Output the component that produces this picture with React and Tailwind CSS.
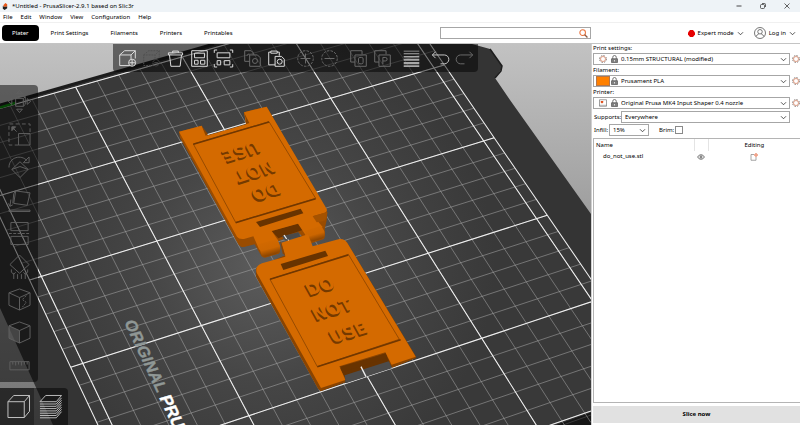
import React from "react";

/* ---------- bed projection: millimetres on the plate -> scene coordinates ---------- */
function project(x, y) {
  const s = (y - 55) / 100;
  const t = (x - 50) / 150;
  const w = 0.02876 * s - 0.09172 * t + 1;
  return [
    (225.21 * s + 111.16 * t + 115) / w,
    (-60.57 * s + 215.87 * t + 161.7) / w,
  ];
}

function segment(x1, y1, x2, y2) {
  const a = project(x1, y1);
  const b = project(x2, y2);
  return `M${a[0].toFixed(1)} ${a[1].toFixed(1)}L${b[0].toFixed(1)} ${b[1].toFixed(1)}`;
}

const range = (from, to, step) => {
  const out = [];
  for (let v = from; v <= to; v += step) out.push(v);
  return out;
};

const minorLines = [
  ...range(5, 205, 10).map((y) => segment(0, y, 255, y)),
  ...range(0, 250, 10).map((x) => segment(x, 0, x, 210)),
].join("");

const majorLines = [
  ...[0, 5, 55, 105, 155, 205, 210].map((y) => segment(0, y, 250, y)),
  ...range(0, 250, 50).map((x) => segment(x, 0, x, 210)),
].join("");

const SIGN_FONT = '"DejaVu Sans", sans-serif';

function Emboss({ x, y, turn, children }) {
  const side = turn > 90 ? -1 : 1;
  const common = {
    textAnchor: "middle",
    fontFamily: SIGN_FONT,
    fontWeight: 700,
    fontSize: 17,
  };
  return (
    <g transform={`translate(${x} ${y}) rotate(${turn}) skewX(12)`}>
      <text {...common} x={-1.8 * side} y={6 + 2 * side} fill="#743a00">{children}</text>
      <text {...common} x={-0.9 * side} y={6 + side} fill="#743a00" aria-hidden="true">{children}</text>
      <text {...common} x={0} y={6} fill="#d46a00" aria-hidden="true">{children}</text>
    </g>
  );
}

function Scene() {
  return (
    <svg
      className="absolute inset-0 h-full w-full"
      viewBox="0 44 591 381"
      preserveAspectRatio="xMinYMin slice"
      role="img"
      aria-label="Print bed"
    >
      <defs>
        <linearGradient id="sky" x1="0" y1="0" x2="0" y2="1">
          <stop offset="0" stopColor="#c2c2c2" />
          <stop offset="1" stopColor="#727272" />
        </linearGradient>
        <radialGradient id="bed" gradientUnits="userSpaceOnUse" cx="265" cy="265" r="230">
          <stop offset="0" stopColor="#5c5c5c" />
          <stop offset="0.5" stopColor="#464646" />
          <stop offset="1" stopColor="#393939" />
        </radialGradient>
        <linearGradient id="hinge" x1="0" y1="0" x2="0.35" y2="1">
          <stop offset="0" stopColor="#d46a00" />
          <stop offset="0.65" stopColor="#cc6600" />
          <stop offset="1" stopColor="#8a4400" />
        </linearGradient>
      </defs>
      <rect x="0" y="44" width="591" height="381" fill="url(#sky)" />
      <path d="M0 105L30 96L214 44H472L490 49L502 66L501 70L495 78L510 100L591 214V425H53L0 308Z" fill="#343434" />
      <path d="M0 105L214 44" stroke="#1c1c1c" strokeWidth="3" />
      <path d="M490 49L502 66L501 71L495 78" stroke="#1d1d1d" strokeWidth="1.5" fill="none" />
      <path d="M0 110L228 44H430L591 277V412L553 425H98L0 208Z" fill="url(#bed)" />
      <path d="M556 425L591 412.500V425Z" fill="#161616" />
      <path d="M563 425L591 415" stroke="#3a3a3a" strokeWidth="1" />
      <path d={minorLines} stroke="#a8a8a8" strokeOpacity="0.68" strokeWidth="0.8" fill="none" />
      <path d={majorLines} stroke="#f0f0f0" strokeWidth="1.05" fill="none" />
      <path d="M0 107.500L15 103" stroke="#0a8a0a" strokeWidth="2.500" />

      <g transform="translate(124 322) rotate(65) skewX(-9)" fontFamily='"Liberation Sans", Arial, sans-serif' fontWeight="700" strokeWidth="0.4">
        <text x="0" y="0" fontSize="16" fill="#8f9795" stroke="#8f9795">ORIGINAL</text>
        <text x="83" y="0" fontSize="17" fill="#ffffff" stroke="#ffffff">PRU</text>
      </g>

      {/* upper half of the sign */}
      <g transform="translate(170 95) scale(0.33333)">
        <path d="M27 110L30 128L204 446Q210 457 222 456L254 448L275 484Q281 490 290 487L326 476Q333 472 328 460L320 440L385 412L412 440Q420 446 428 443L460 433Q467 429 464 402L470 376L472 352L290 35L222 52L228 76L228 90L110 122L95 92Z" fill="#9a4c00" />
        <path d="M305 408L385 385L398 405L325 430Z" fill="#683300" />
        <path d="M336 424L384 412L392 425L345 436Z" fill="#4a4a4a" />
        <path d="M342 420L350 432" stroke="#eee" strokeWidth="4" />
        <path d="M27 110L95 92L110 122L228 88L222 52L290 35L468 338Q476 350 460 355L430 363L458 396L412 428L384 386L305 408L325 437L268 464L250 424L222 432Q207 434 201 425Z" fill="#d46a00" />
        <path d="M222 52L228 76L228 88L238 84Z" fill="#8d4500" />
        <path d="M95 92L107 122L114 118Z" fill="#8d4500" />
        <path d="M264 448L320 432Q334 452 330 466Q328 473 318 476L290 484Q280 486 275 480Z" fill="url(#hinge)" />
        <path d="M404 408L452 392Q466 406 464 422Q462 429 452 432L428 439Q420 440 414 432Z" fill="url(#hinge)" />
        <path d="M428 364L458 355Q472 350 472 352L469 370Q467 377 458 379L440 382Z" fill="#a55200" />
        <path d="M70 147L297 80L437 310L197 382Z" fill="none" stroke="#8a4400" strokeWidth="2.500" />
        <path d="M70 148L297 81M197 383L437 311" stroke="#703700" strokeWidth="4.500" />
        <path d="M258 381L392 341L400 355L270 396Z" fill="#683300" />
      </g>
      <Emboss x={241} y={151} turn={163}>USE</Emboss>
      <Emboss x={255} y={171} turn={163}>NOT</Emboss>
      <Emboss x={266} y={191} turn={163}>DO</Emboss>

      {/* lower half of the sign */}
      <g transform="translate(240 220) scale(0.33333)">
        <path d="M48 145L48 170L234 506L242 514L316 487L315 470L300 445L437 410L457 443L528 414L527 408L320 66L130 108Z" fill="#8a4400" />
        <path d="M300 445L437 400L448 425L318 478Z" fill="#683300" />
        <path d="M314 466L446 424L456 445L318 490Z" fill="#4c4c4c" />
        <path d="M363 440L378 470" stroke="#eee" strokeWidth="4" />
        <path d="M314 454L440 414L440 400L300 440Z" fill="#683300" />
        <path d="M124 68L204 43L218 79L298 57Q313 55 322 69L527 410L455 434L436 397L298 439L316 480L243 504L50 158Q44 138 66 130L136 110Z" fill="#d46a00" />
        <path d="M120 64L124 68L136 108L128 100Z" fill="#8a4400" />
        <path d="M90 178L325 103L478 358L232 440Z" fill="none" stroke="#8a4400" strokeWidth="2.500" />
        <path d="M90 178L325 105M232 440L482 359" stroke="#703700" strokeWidth="4.500" />
        <path d="M122 132L256 92L264 108L130 150Z" fill="#683300" />
      </g>
      <Emboss x={320} y={286} turn={-17}>DO</Emboss>
      <Emboss x={332} y={309} turn={-17}>NOT</Emboss>
      <Emboss x={348} y={332} turn={-17}>USE</Emboss>
    </svg>
  );
}

/* ---------- toolbar icons, all on a 24 x 24 grid ---------- */
const icons = {
  add: (
    <>
      <path d="M15 22H1V7H17V13M1 7L8 1H23L17 7M23 1V12" />
      <circle cx="18.500" cy="18" r="5" />
      <path d="M18.500 14V22M14.500 18H22.500" />
    </>
  ),
  remove: (
    <>
      <path d="M15 22H1V7H17V13M1 7L8 1H23L17 7M23 1V12" strokeDasharray="2.500 1.500" />
      <circle cx="18.500" cy="18" r="4.500" strokeDasharray="2 1" />
      <path d="M16 18H21" />
    </>
  ),
  trash: <path d="M2 4H22V7H2ZM8 4V1.500H16V4M3.500 7L5.500 23H18.500L20.500 7" />,
  arrange: (
    <>
      <path d="M1 1H23V23H1Z" />
      <path d="M5 4.500H19V11H5ZM5 14.500H10V20H5ZM13.500 14.500H19.500V20H13.500Z" />
    </>
  ),
  arrangeSel: (
    <>
      <path d="M-1 4V0H3M21 0H25V4M25 20V24H21M3 24H-1V20" />
      <path d="M3 4H21V11H3ZM3 15H8V21H3ZM13 15H21V21H13Z" />
    </>
  ),
  copy: (
    <>
      <path d="M8 16H1V1H10L13 4V7M8 7H19L23 11V23H8Z" />
      <circle cx="15.500" cy="15.500" r="3.500" />
      <path d="M4 8.500A3 3 0 0 1 8 6" />
    </>
  ),
  paste: (
    <>
      <path d="M10 21H1V3H4M13 3H16V8M4 1.500H13V4.500H4ZM10 9H19L23 13V23H10Z" />
      <circle cx="16.500" cy="16.500" r="3.500" />
    </>
  ),
  plus: (
    <>
      <circle cx="12" cy="12" r="11" strokeDasharray="3.500 1.800" />
      <path d="M12 5V19M5 12H19" />
    </>
  ),
  minus: (
    <>
      <circle cx="12" cy="12" r="11" strokeDasharray="3.500 1.800" />
      <path d="M5 12H19" />
    </>
  ),
  splitO: (
    <>
      <path d="M7 17H1V1H17V6M7 7H23V23H7Z" />
      <rect x="12" y="10.500" width="6.500" height="9" rx="2" />
    </>
  ),
  splitP: (
    <>
      <path d="M7 17H1V1H17V6M7 7H23V23H7Z" />
      <path d="M12.500 20V10.500H16A2.500 2.500 0 0 1 16 15.500H12.500" />
    </>
  ),
  layers: (
    <g stroke="none" fill="currentColor">
      <path d="M1 1H23V2H1ZM1 4.500H23V6H1ZM1 8.500H23V10.500H1ZM1 12.500H23V15H1ZM1 17H23V20H1ZM1 21.500H23V24H1Z" />
    </g>
  ),
  undo: <path d="M5 2.500L0.500 7L5 11.500M0.500 7H17.500A5.500 5.500 0 0 1 17.500 19.500H12" />,
  redo: <path d="M19 2.500L23.500 7L19 11.500M23.500 7H6.500A5.500 5.500 0 0 0 6.500 19.500H12" />,
  move: (
    <>
      <path d="M8 9H16V17H8ZM8 9L10 7H18V15L16 17M16 9L18 7" />
      <path d="M12 0.500L15 4H9ZM12 23.500L9 20H15ZM0.500 12L4 9V15ZM23.500 12L20 9V15Z" />
    </>
  ),
  scale: (
    <>
      <path d="M11 23H1V1H23V11" strokeDasharray="4 2.500" />
      <path d="M11 11H23V23H11ZM9 9L5 5" />
      <path d="M4 8V4H8Z" fill="currentColor" />
    </>
  ),
  rotate: (
    <>
      <path d="M12.500 6L21 14L12.500 22.500L4 14ZM4 14L12.500 11L21 14" />
      <path d="M1 12C1 1 14 -2 20 5M22 1V7H16Z" />
    </>
  ),
  place: (
    <>
      <path d="M8 2L23 4L20 17L6 15ZM8 2L6 5L5 15" />
      <path d="M1 22H23V23.500H1ZM3 11L2 18M0.500 15L2 18L5 16.500" />
    </>
  ),
  cut: (
    <>
      <path d="M3 0.500H21V9H3ZM3 15H21V23.500H3Z" />
      <path d="M1 12H23" strokeDasharray="3 1.500" />
    </>
  ),
  supports: (
    <>
      <path d="M12 0L22 10L12 19L2 10Z" />
      <path d="M6 19V25M3.500 15V18L6 20L8 18M10 20V25M14 20V25M18 19V25M20.500 15V18L18 20L16 18" />
    </>
  ),
  seam: (
    <>
      <path d="M12 1L23 5V18L12 23L1 18V5ZM1 5L12 10L23 5M12 10V23" />
      <path d="M19 8L15 12L19 15L15 20" strokeDasharray="2 1" />
    </>
  ),
  paint: (
    <>
      <path d="M12 1L23 5V18L12 23L1 18V5ZM1 5L12 10L23 5M12 10V23" />
      <path d="M1 5L12 10V23L1 18Z" fill="currentColor" fillOpacity="0.6" stroke="none" />
    </>
  ),
  ruler: <path d="M2 8H22V16.500H2ZM5 8V11M8 8V12M11 8V11M14 8V12M17 8V11M20 8V11" />,
  cube: <path d="M1 7H18V23.500H1ZM1 7L7 0.500H23.500L18 7M23.500 0.500V17L18 23.500" />,
  sliced: (
    <path d="M1 7H18M1 9.400H18M1 11.800H18M1 14.200H18M1 16.600H18M1 19H18M1 21.400H18M1 23.800H18M1 7L7 0.500H23.500L18 7M18 9.400L23.500 3M18 11.800L23.500 5.400M18 14.200L23.500 7.800M18 16.600L23.500 10.200M18 19L23.500 12.600M18 21.400L23.500 15M18 23.800L23.500 17.400" />
  ),
};

function Icon({ name, className, strokeWidth = 1.4 }) {
  return (
    <svg viewBox="0 0 24 24" className={className} fill="none" stroke="currentColor" strokeWidth={strokeWidth} aria-hidden="true" overflow="visible">
      {icons[name]}
    </svg>
  );
}

const ON = "text-[#dedede]";
const OFF = "text-[#6a6a6a]";
const toolGroups = [
  [["add", "Add", ON], ["remove", "Delete", "text-[#505050]"], ["trash", "Delete all", ON], ["arrange", "Arrange", ON], ["arrangeSel", "Arrange selection", ON]],
  [["copy", "Copy", OFF], ["paste", "Paste", ON]],
  [["plus", "Add instance", OFF], ["minus", "Remove instance", OFF]],
  [["splitO", "Split to objects", OFF], ["splitP", "Split to parts", OFF]],
  [["layers", "Variable layer height", "text-[#a8a8a8]"]],
  [["undo", "Undo", "text-[#c4c4c4]"], ["redo", "Redo", OFF]],
];

const gizmos = [
  ["move", "Move"],
  ["scale", "Scale"],
  ["rotate", "Rotate"],
  ["place", "Place on face"],
  ["cut", "Cut"],
  ["supports", "Paint-on supports"],
  ["seam", "Seam painting"],
  ["paint", "Multimaterial painting"],
  ["ruler", "Measure"],
];

function Viewport() {
  return (
    <main className="relative min-w-0 flex-1 overflow-hidden bg-[#343434]">
      <Scene />
      <div className="absolute left-[113px] top-0 flex h-7 gap-[5px] rounded-b-sm bg-black/50 px-[2px]">
        {toolGroups.map((group, i) => (
          <div key={i} className="flex">
            {group.map(([name, label, tone]) => (
              <button key={name} type="button" aria-label={label} className={`flex w-6 items-center justify-center ${tone}`}>
                <Icon name={name} className="h-[17px] w-[17px]" />
              </button>
            ))}
          </div>
        ))}
      </div>
      <div className="absolute left-0 top-[41px] flex w-[38px] flex-col rounded-r-sm bg-black/50">
        {gizmos.map(([name, label]) => (
          <button key={name} type="button" aria-label={label} className="flex h-[33px] items-center justify-center text-[#606060]">
            <Icon name={name} className="h-[23px] w-[23px]" strokeWidth={1} />
          </button>
        ))}
      </div>
      <div className="absolute bottom-0 left-0 flex h-[37px] overflow-hidden rounded-tr-sm bg-black/50">
        <button type="button" aria-label="3D editor view" className="flex w-[34px] items-center justify-center bg-black/30 pl-[2px] text-[#c8c8c8]">
          <Icon name="cube" className="h-[23px] w-[23px]" strokeWidth={1} />
        </button>
        <button type="button" aria-label="Preview" className="flex w-[34px] items-center justify-center pr-[2px] text-[#c0c0c0]">
          <Icon name="sliced" className="h-[23px] w-[23px]" strokeWidth={1} />
        </button>
      </div>
    </main>
  );
}

/* ---------- small glyphs ---------- */
function Chevron() {
  return (
    <svg viewBox="0 0 8 6" className="h-[5px] w-[7px] shrink-0" fill="none" stroke="#333" strokeWidth="1" aria-hidden="true">
      <path d="M1 1.500L4 4.500L7 1.500" />
    </svg>
  );
}

function Gear() {
  return (
    <svg viewBox="0 0 16 16" className="h-2 w-2 shrink-0" fill="none" aria-hidden="true">
      <circle cx="8" cy="8" r="6.800" stroke="#6e6460" strokeWidth="1.800" strokeDasharray="3 2.340" />
      <circle cx="8" cy="8" r="5" stroke="#dd9478" strokeWidth="1.800" />
    </svg>
  );
}

function Lock() {
  return (
    <svg viewBox="0 0 14 16" className="h-2 w-[7px] shrink-0" fill="none" aria-hidden="true">
      <path d="M3.500 8V4.500A3.500 3.500 0 0 1 10.500 4.500V8" stroke="#666" strokeWidth="1.800" />
      <path d="M1 7.500H13V15H1Z" fill="#808080" stroke="#555" strokeWidth="1.400" />
      <path d="M7 10V13" stroke="#fff" strokeWidth="1.500" />
    </svg>
  );
}

function PrinterGlyph() {
  return (
    <svg viewBox="0 0 16 16" className="h-2 w-2 shrink-0" aria-hidden="true">
      <path d="M1 1.500H15V14.500H1Z" fill="#fff" stroke="#777" strokeWidth="1.400" />
      <path d="M1 12.500H15" stroke="#777" strokeWidth="1" />
      <path d="M3.500 4H8.500V7L6 9L3.500 7Z" fill="#e0501c" />
    </svg>
  );
}

function Preset({ id, label, value, glyph }) {
  return (
    <div className="mb-px">
      <label htmlFor={id} className="block h-[9px]">{label}</label>
      <div className="flex items-center gap-[2px]">
        <div className="flex h-3 min-w-0 flex-1 items-center border border-[#a6a6a6] bg-white pr-[2px]">
          <span className="flex w-[17px] shrink-0 justify-center">{glyph}</span>
          <Lock />
          <select id={id} defaultValue={value} className="ml-[3px] min-w-0 flex-1 appearance-none bg-transparent leading-[10px] outline-none">
            <option>{value}</option>
          </select>
          <Chevron />
        </div>
        <button type="button" aria-label={`Edit ${label}`}><Gear /></button>
      </div>
    </div>
  );
}

function Sidebar() {
  return (
    <aside className="flex w-[209px] shrink-0 flex-col border-l border-[#d0d0d0] bg-white pl-px">
      <Preset id="print" label="Print settings:" value="0.15mm STRUCTURAL (modified)" glyph={<Gear />} />
      <Preset id="filament" label="Filament:" value="Prusament PLA" glyph={<span className="h-2 w-3 bg-[#ff8000] outline outline-[#b5764a]" />} />
      <Preset id="printer" label="Printer:" value="Original Prusa MK4 Input Shaper 0.4 nozzle" glyph={<PrinterGlyph />} />
      <div className="mt-px flex items-center pr-[10px]">
        <label htmlFor="supports" className="w-7 shrink-0 pl-px">Supports:</label>
        <div className="flex h-3 flex-1 items-center border border-[#a6a6a6] pl-[3px] pr-[2px]">
          <select id="supports" defaultValue="Everywhere" className="min-w-0 flex-1 appearance-none bg-transparent leading-[10px] outline-none">
            <option>Everywhere</option>
          </select>
          <Chevron />
        </div>
      </div>
      <div className="mt-px flex items-center">
        <label htmlFor="infill" className="w-4 shrink-0 pl-px">Infill:</label>
        <div className="flex h-3 w-10 items-center border border-[#a6a6a6] pl-[3px] pr-[2px]">
          <select id="infill" defaultValue="15%" className="min-w-0 flex-1 appearance-none bg-transparent leading-[10px] outline-none">
            <option>15%</option>
          </select>
          <Chevron />
        </div>
        <label htmlFor="brim" className="ml-[10px]">Brim:</label>
        <input id="brim" type="checkbox" className="ml-px h-2 w-2 appearance-none border border-[#8a8a8a] bg-white" />
      </div>
      <div className="mt-[2px] flex-1 border-y border-l border-[#b4b4b4]">
        <table className="w-full table-fixed border-collapse text-left">
          <thead>
            <tr className="h-3">
              <th className="pl-[2px] font-normal">Name</th>
              <th className="w-[14px] border-x border-[#e4e4e4]" aria-label="Visible" />
              <th className="w-[92px] text-center font-normal">Editing</th>
            </tr>
          </thead>
          <tbody>
            <tr className="h-[11px]">
              <td className="pl-[9px]">do_not_use.stl</td>
              <td>
                <svg viewBox="0 0 16 12" className="mx-auto h-[6px] w-2" fill="none" stroke="#444" strokeWidth="1.600" aria-label="Visible">
                  <path d="M1 6Q8 -3 15 6Q8 15 1 6Z" />
                  <circle cx="8" cy="6" r="2" />
                </svg>
              </td>
              <td>
                <svg viewBox="0 0 16 16" className="mx-auto h-2 w-2" fill="none" aria-label="Edit object">
                  <path d="M8 3H2V14.500H12V8" stroke="#888" strokeWidth="1.500" />
                  <circle cx="12" cy="4" r="2.500" stroke="#e8704a" strokeWidth="2" />
                </svg>
              </td>
            </tr>
          </tbody>
        </table>
      </div>
      <button type="button" className="mb-[2px] mt-[3px] h-[17px] shrink-0 bg-[#e1e1e1] font-bold">Slice now</button>
    </aside>
  );
}

function WindowHeader() {
  return (
    <header className="shrink-0">
      <div className="flex h-3 items-center bg-[#eef3f7] pl-[2px] pr-[10px]">
        <svg viewBox="0 0 12 16" className="h-[7px] w-[6px]" aria-hidden="true">
          <path d="M2 5L7 0L11 3V8L4 9Z" fill="#e85a1c" />
          <path d="M1 6L4 9L11 8V12L5 16L1 13Z" fill="#222" />
        </svg>
        <h1 className="ml-1 flex-1">*Untitled - PrusaSlicer-2.9.1 based on Slic3r</h1>
        <div className="flex gap-[18px] text-[#333]">
          <button type="button" aria-label="Minimize">
            <svg viewBox="0 0 12 12" className="h-[6px] w-[6px]" stroke="currentColor" strokeWidth="1.800"><path d="M1 6H11" /></svg>
          </button>
          <button type="button" aria-label="Restore">
            <svg viewBox="0 0 12 12" className="h-[6px] w-[6px]" fill="none" stroke="currentColor" strokeWidth="1.500"><rect x="1" y="3" width="8" height="8" rx="2" /><path d="M4 1H9A2 2 0 0 1 11 3V8" /></svg>
          </button>
          <button type="button" aria-label="Close">
            <svg viewBox="0 0 12 12" className="h-[6px] w-[6px]" stroke="currentColor" strokeWidth="1.500"><path d="M1 1L11 11M11 1L1 11" /></svg>
          </button>
        </div>
      </div>
      <nav className="flex h-[11px] items-center gap-2 border-b border-[#f0f0f0] pl-[3px]" aria-label="Menu">
        {["File", "Edit", "Window", "View", "Configuration", "Help"].map((item) => (
          <button key={item} type="button">{item}</button>
        ))}
      </nav>
      <div className="flex h-[21px] items-center border-b border-[#c4c4c4] pl-[2px]">
        <button type="button" className="mr-px h-4 rounded-sm bg-black px-[10px] text-white">Plater</button>
        {["Print Settings", "Filaments", "Printers", "Printables"].map((item) => (
          <button key={item} type="button" className="h-4 px-[11px]">{item}</button>
        ))}
        <div className="ml-auto flex h-3 w-[151px] items-center border border-[#a6a6a6] pr-[2px]">
          <input type="text" aria-label="Search" className="min-w-0 flex-1 bg-transparent px-1 outline-none" />
          <svg viewBox="0 0 16 16" className="h-[9px] w-[9px]" fill="none" aria-hidden="true">
            <circle cx="6.500" cy="6.500" r="5" stroke="#e8703a" strokeWidth="1.800" />
            <path d="M10 10L15 15" stroke="#8a5a44" strokeWidth="2.500" />
          </svg>
        </div>
        <div className="flex w-[209px] shrink-0 items-center justify-end pr-1">
          <button type="button" className="flex items-center gap-[3px]">
            <svg viewBox="0 0 14 14" className="h-[7px] w-[7px]" aria-hidden="true"><path d="M4 0H10L14 5V9L10 14H4L0 9V5Z" fill="#e60000" /></svg>
            Expert mode
            <Chevron />
          </button>
          <button type="button" className="ml-[10px] flex items-center gap-[3px]">
            <svg viewBox="0 0 24 24" className="h-3 w-3" fill="none" stroke="#555" strokeWidth="1.600" aria-hidden="true">
              <circle cx="12" cy="12" r="11" />
              <circle cx="12" cy="9.500" r="4.500" />
              <path d="M4 19Q6 15 9.500 14M20 19Q18 15 14.500 14" />
            </svg>
            Log in
            <Chevron />
          </button>
        </div>
      </div>
    </header>
  );
}

export default function App() {
  return (
    <div className="flex h-screen flex-col overflow-hidden bg-white font-['Noto_Sans','Open_Sans',sans-serif] text-[6px] leading-[9px] text-black">
      <WindowHeader />
      <div className="flex min-h-0 flex-1">
        <Viewport />
        <Sidebar />
      </div>
    </div>
  );
}
